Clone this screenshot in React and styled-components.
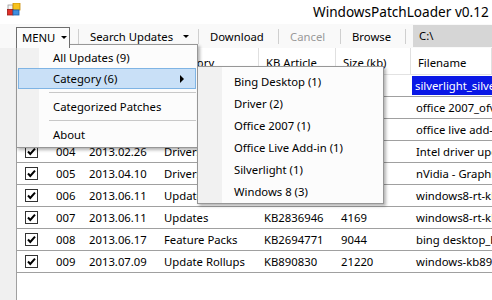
import React from 'react';
import styled, { createGlobalStyle } from 'styled-components';

const rows = [
  { id: '001', date: '2012.10.09', cat: 'Updates', kb: 'KB2668562', size: '6612', file: 'silverlight_silverlight.exe', selected: true },
  { id: '002', date: '2012.12.11', cat: 'Updates', kb: 'KB2687499', size: '3310', file: 'office 2007_ofv_kb2687499.exe' },
  { id: '003', date: '2013.01.08', cat: 'Updates', kb: 'KB2523041', size: '1280', file: 'office live add-in_kb2523041.exe' },
  { id: '004', date: '2013.02.26', cat: 'Drivers', kb: 'KB2814251', size: '2114', file: 'Intel driver update.exe' },
  { id: '005', date: '2013.04.10', cat: 'Drivers', kb: 'KB2834527', size: '18012', file: 'nVidia - Graphics Adapter.exe' },
  { id: '006', date: '2013.06.11', cat: 'Updates', kb: 'KB2839894', size: '3702', file: 'windows8-rt-kb2839894.msu' },
  { id: '007', date: '2013.06.11', cat: 'Updates', kb: 'KB2836946', size: '4169', file: 'windows8-rt-kb2836946.msu' },
  { id: '008', date: '2013.06.17', cat: 'Feature Packs', kb: 'KB2694771', size: '9044', file: 'bing desktop_bing.exe' },
  { id: '009', date: '2013.07.09', cat: 'Update Rollups', kb: 'KB890830', size: '21220', file: 'windows-kb890830.exe' },
];

const categories = [
  'Bing Desktop (1)',
  'Driver (2)',
  'Office 2007 (1)',
  'Office Live Add-in (1)',
  'Silverlight (1)',
  'Windows 8 (3)',
];

export default function App() {
  return (
    <>
      <GlobalStyle />
      <Window>
        <TitleBar>
          <AppIcon viewBox="0 0 14 13">
            <rect x="1" y="2" width="5" height="5" fill="#f4f4f4" stroke="#9a9a9a" strokeWidth="0.8" />
            <rect x="6" y="0" width="7" height="7" fill="#f6c21c" stroke="#c98a00" strokeWidth="0.8" />
            <rect x="0.5" y="6.5" width="5.5" height="5.5" fill="#e0302a" stroke="#9c1a14" strokeWidth="0.8" />
            <rect x="6" y="7" width="6" height="5" fill="#3f8fe0" stroke="#1d5fa8" strokeWidth="0.8" />
          </AppIcon>
          <Title>WindowsPatchLoader v0.12</Title>
        </TitleBar>

        <Toolbar>
          <MenuButton>
            MENU <Caret />
          </MenuButton>
          <Sep />
          <ToolButton $w={119}>
            Search Updates <Caret $gap={10} />
          </ToolButton>
          <Sep />
          <ToolButton $w={79}>Download</ToolButton>
          <Sep />
          <ToolButton $w={61} $disabled>
            Cancel
          </ToolButton>
          <Sep />
          <ToolButton $w={64}>Browse</ToolButton>
          <Sep />
          <PathBox>C:\</PathBox>
        </Toolbar>

        <Grid>
          <HeaderRow>
            <HeadCell />
            <HeadCell>ID</HeadCell>
            <HeadCell>Date</HeadCell>
            <HeadCell>Category</HeadCell>
            <HeadCell>KB Article</HeadCell>
            <HeadCell>Size (kb)</HeadCell>
            <HeadCell>Filename</HeadCell>
          </HeaderRow>
          {rows.map(r => (
            <Row key={r.id}>
              <CheckCell>
                <CheckBox viewBox="0 0 13 13">
                  <rect x="0.5" y="0.5" width="12" height="12" fill="#fff" stroke="#333" />
                  <path d="M3 6.5 L5.3 9 L10 3.6" fill="none" stroke="#000" strokeWidth="2" />
                </CheckBox>
              </CheckCell>
              <Cell>{r.id}</Cell>
              <Cell>{r.date}</Cell>
              <Cell>{r.cat}</Cell>
              <Cell>{r.kb}</Cell>
              <Cell>{r.size}</Cell>
              <Cell $selected={r.selected}>{r.file}</Cell>
            </Row>
          ))}
        </Grid>

        <DropMenu>
          <MenuItem>All Updates (9)</MenuItem>
          <MenuItem $active>
            Category (6)
            <SubArrow />
          </MenuItem>
          <MenuSep />
          <MenuItem>Categorized Patches</MenuItem>
          <MenuSep />
          <MenuItem>About</MenuItem>
        </DropMenu>

        <SubMenu>
          {categories.map(c => (
            <SubItem key={c}>{c}</SubItem>
          ))}
        </SubMenu>
      </Window>
    </>
  );
}

const GlobalStyle = createGlobalStyle`
  html, body {
    margin: 0;
    padding: 0;
  }

  body {
    background: #f0f0f0;
    font-family: "Noto Sans", "Segoe UI", sans-serif;
    font-size: 11.3px;
    color: #000;
  }
`;

const Window = styled.div`
  position: relative;
  display: flex;
  flex-direction: column;
  width: 492px;
  height: 300px;
  overflow: hidden;
  background: #f0f0f0;
`;

const TitleBar = styled.div`
  display: flex;
  align-items: center;
  height: 24px;
  padding-left: 7px;
  background: #fff;
`;

const AppIcon = styled.svg`
  flex-shrink: 0;
  width: 14px;
  height: 13px;
  margin-top: -6px;
`;

const Title = styled.div`
  flex-shrink: 0;
  margin-left: 292px;
  margin-top: -2px;
  font-size: 13.6px;
  white-space: nowrap;
`;

const Toolbar = styled.div`
  display: flex;
  align-items: center;
  height: 24px;
  padding-left: 16px;
  background: #f9f9f9;
  white-space: nowrap;

  & > * {
    flex-shrink: 0;
  }
`;

const Caret = styled.span`
  display: inline-block;
  margin-left: ${p => p.$gap || 6}px;
  border-left: 3px solid transparent;
  border-right: 3px solid transparent;
  border-top: 3px solid #000;
  vertical-align: middle;
`;

const MenuButton = styled.div`
  position: relative;
  z-index: 3;
  display: flex;
  align-items: center;
  box-sizing: border-box;
  width: 54px;
  height: 21px;
  margin-top: 3px;
  margin-right: 8px;
  padding: 0 0 2px 5px;
  border: 1px solid #6e6e6e;
  border-bottom: none;
  background: #fcfcfc;
`;

const Sep = styled.div`
  width: 1px;
  height: 15px;
  background: #cfcfcf;
`;

const ToolButton = styled.div`
  box-sizing: border-box;
  display: flex;
  align-items: center;
  width: ${p => p.$w}px;
  padding-left: 11px;
  color: ${p => (p.$disabled ? '#9a9a9a' : '#000')};
`;

const PathBox = styled.div`
  flex: 1;
  height: 22px;
  line-height: 22px;
  margin-left: 7px;
  padding-left: 6px;
  background: #d6d6d6;
`;

const Grid = styled.div`
  flex: 1;
  margin-left: 16px;
  border-left: 1px solid #a0a0a0;
  background: #fff;
`;

const columns = '34px 33px 75px 100px 77px 75px 1fr';

const HeaderRow = styled.div`
  display: grid;
  grid-template-columns: ${columns};
  height: 27px;
  box-sizing: border-box;
  border-bottom: 1px solid #e2e2e2;
`;

const HeadCell = styled.div`
  display: flex;
  align-items: center;
  padding-left: 7px;
  padding-top: 2px;
  border-right: 1px solid #e0e0e0;
  white-space: nowrap;
  overflow: hidden;
`;

const Row = styled.div`
  display: grid;
  grid-template-columns: ${columns};
  height: 22px;
  box-sizing: border-box;
  border-bottom: 1px solid #a0a0a0;
`;

const Cell = styled.div`
  display: flex;
  align-items: center;
  padding-left: ${p => (p.$selected ? 3 : 5)}px;
  margin: ${p => (p.$selected ? '1px 0 1px 1px' : '0')};
  white-space: nowrap;
  overflow: hidden;
  background: ${p => (p.$selected ? '#0a18e6' : 'transparent')};
  color: ${p => (p.$selected ? '#fff' : '#000')};
`;

const CheckCell = styled.div`
  display: flex;
  align-items: center;
  padding-left: 8px;
`;

const CheckBox = styled.svg`
  width: 13px;
  height: 13px;
`;

const DropMenu = styled.div`
  position: absolute;
  z-index: 2;
  top: 44px;
  left: 16px;
  box-sizing: border-box;
  width: 182px;
  padding: 2px 1px;
  border: 1px solid #979797;
  background: linear-gradient(to right, #f1f1f1 0 22px, #fcfcfc 22px);
  box-shadow: 2px 2px 3px rgba(0, 0, 0, 0.3);
`;

const MenuItem = styled.div`
  position: relative;
  display: flex;
  align-items: center;
  box-sizing: border-box;
  height: 21px;
  padding-left: 34px;
  border: 1px solid ${p => (p.$active ? '#7fb4e4' : 'transparent')};
  background: ${p => (p.$active ? '#c9e0f7' : 'transparent')};
`;

const SubArrow = styled.span`
  position: absolute;
  right: 11px;
  top: 6px;
  border-top: 4px solid transparent;
  border-bottom: 4px solid transparent;
  border-left: 4px solid #000;
`;

const MenuSep = styled.div`
  height: 7px;
  margin-left: 31px;
  background: linear-gradient(#c8c8c8, #c8c8c8) 0 3px / 100% 1px no-repeat;
`;

const SubMenu = styled.div`
  position: absolute;
  z-index: 4;
  top: 66px;
  left: 197px;
  box-sizing: border-box;
  width: 187px;
  padding: 3px 1px 1px;
  border: 1px solid #979797;
  background: linear-gradient(to right, #f1f1f1 0 24px, #fcfcfc 24px);
  box-shadow: 2px 2px 3px rgba(0, 0, 0, 0.3);
`;

const SubItem = styled.div`
  display: flex;
  align-items: center;
  height: 22px;
  padding-left: 35px;
`;
